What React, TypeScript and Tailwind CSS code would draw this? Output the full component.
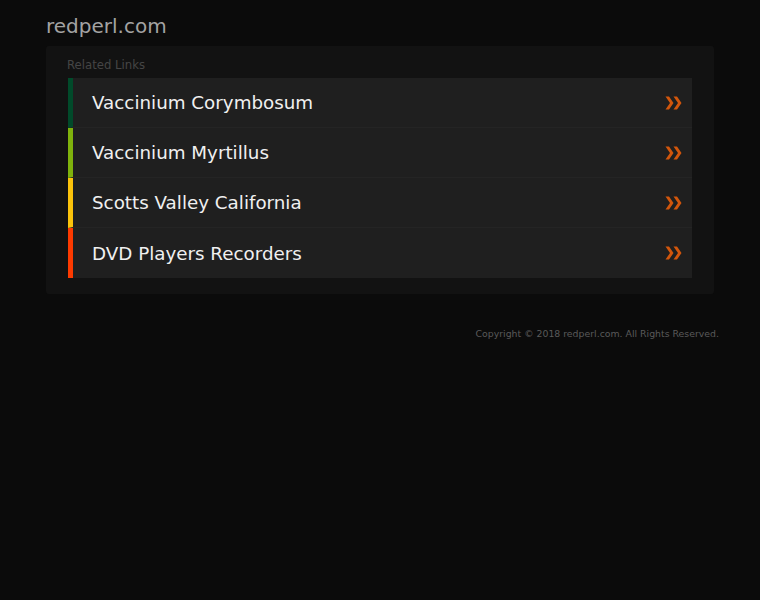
import React from "react";

const links = [
  { label: "Vaccinium Corymbosum", color: "border-[#014a2a]" },
  { label: "Vaccinium Myrtillus", color: "border-[#7fb20c]" },
  { label: "Scotts Valley California", color: "border-[#fbc30b]" },
  { label: "DVD Players Recorders", color: "border-[#fd3a00]" },
];

function Chevrons() {
  return (
    <svg width="18" height="14" viewBox="0 0 18 14" className="shrink-0">
      <path d="M0.5 0.5 H4 L8.5 7 L4 13.5 H0.5 L5 7 Z" fill="#d2560c" />
      <path d="M8.5 0.5 H12 L16.5 7 L12 13.5 H8.5 L13 7 Z" fill="#d2560c" />
    </svg>
  );
}

export default function App() {
  return (
    <div className="min-h-[600px] w-full bg-[#0b0b0b]" style={{ fontFamily: '"DejaVu Sans", Verdana, sans-serif' }}>
      <div className="w-[668px] ml-[46px] pt-[13px]">
        <div className="text-[20px] leading-[26px] text-[#a3a3a3]">redperl.com</div>
        <div className="mt-[7px] bg-[#121212] rounded-[3px] px-[22px] pb-[16px] pt-[10px]">
          <div className="text-[11.7px] leading-[18px] text-[#454545] -ml-[1px]">Related Links</div>
          <div className="mt-[4px] flex flex-col">
            {links.map((l, i) => (
              <a
                key={i}
                className={`flex items-center h-[50px] bg-[#1f1f1f] border-l-[5px] ${l.color} ${i < links.length - 1 ? "border-b border-b-[#242424]" : ""} pl-[19px] pr-[9px]`}
              >
                <span className="flex-1 text-[18.3px] text-[#f0f0f0] leading-none pt-[2px]">{l.label}</span>
                <Chevrons />
              </a>
            ))}
          </div>
        </div>
        <div className="mt-[33px] text-right text-[9.35px] text-[#5a5a5a] -mr-[5px]">
          Copyright © 2018 redperl.com. All Rights Reserved.
        </div>
      </div>
    </div>
  );
}
